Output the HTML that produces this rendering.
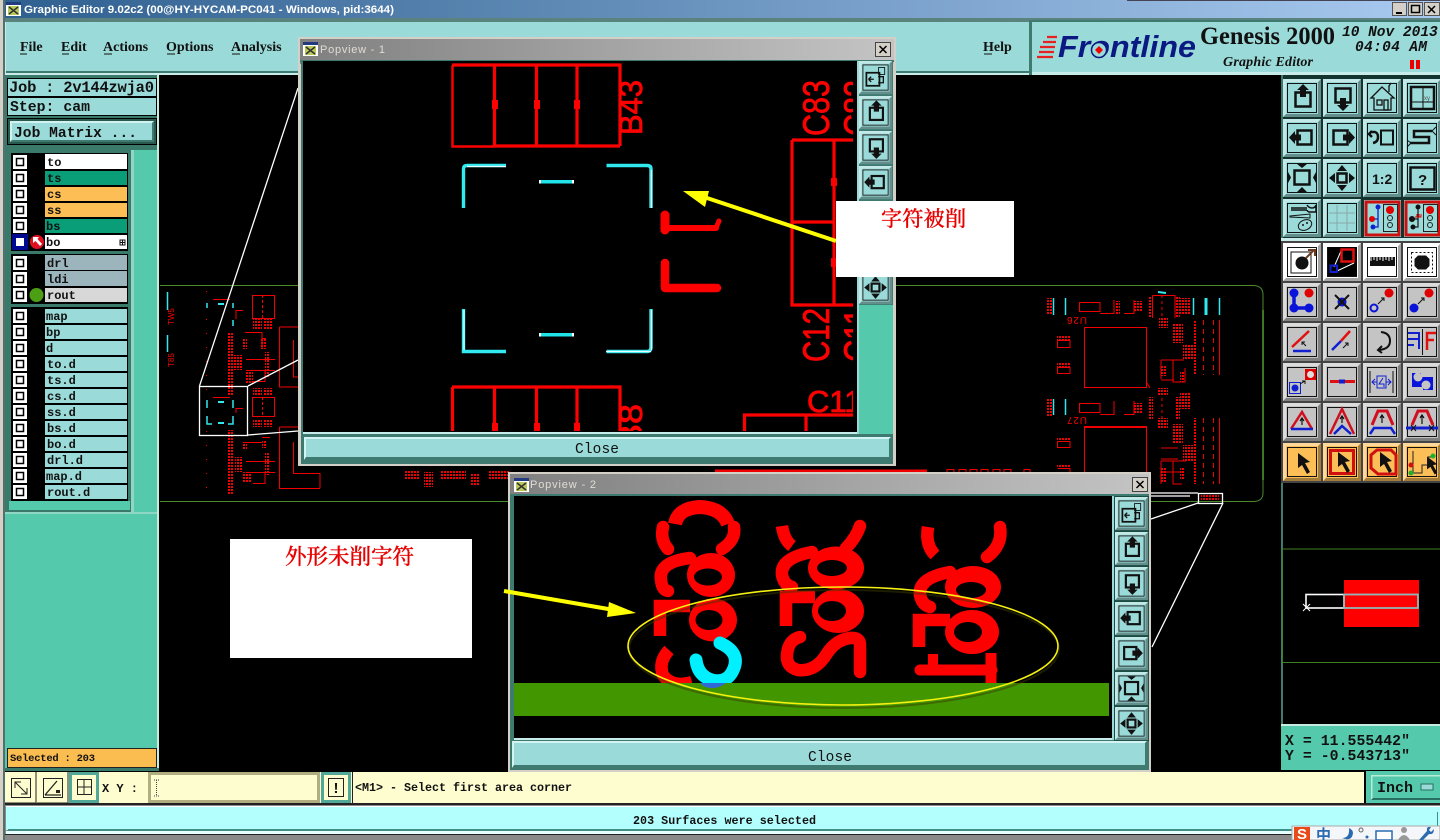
<!DOCTYPE html>
<html><head><meta charset="utf-8"><title>Graphic Editor</title>
<style>
html,body{margin:0;padding:0;background:#000;overflow:hidden;width:1440px;height:840px}
svg{display:block;position:absolute;left:0;top:0}
text{white-space:pre}
.m{font-family:"Liberation Mono",monospace;font-weight:bold;fill:#111}
.l{font-family:"Liberation Mono",monospace;font-weight:bold;font-size:12px;fill:#111}
.s{font-family:"Liberation Serif",serif;font-weight:bold;font-size:14px;fill:#111}
.r{font-family:"Liberation Sans",sans-serif;fill:#f00}
.c{font-family:"Liberation Serif","Noto Serif CJK SC",serif;fill:#e80000;font-weight:500;stroke:#e80000;stroke-width:.3px}
</style></head><body>
<svg width="1440" height="840" viewBox="0 0 1440 840" xmlns="http://www.w3.org/2000/svg">
<defs>
<linearGradient id="tg"><stop offset="0" stop-color="#2f6090"/><stop offset="1" stop-color="#a9caf0"/></linearGradient>
<linearGradient id="pg"><stop offset="0" stop-color="#808080"/><stop offset="1" stop-color="#c4c4c4"/></linearGradient>
<pattern id="d" width="3" height="3" patternUnits="userSpaceOnUse"><rect width="2" height="2" fill="#f00000"/></pattern>
<g id="f"><rect width="38" height="38"/><path d="M0 0H38L35 3H3V35L0 38Z" fill="#fff" opacity=".4"/><path d="M38 38H0L3 35H35V3L38 0Z" fill="#000" opacity=".35"/><rect x="4.500" y="4.500" width="29" height="29" fill="none" stroke="#111"/></g>
<g id="iup"><rect x="12.500" y="13.500" width="15" height="14" fill="none" stroke="#111" stroke-width="2.500"/><path d="M20 5L26 11H23V18H17V11H14Z" fill="#111"/></g>
<g id="idn"><rect x="12.500" y="9.500" width="15" height="14" fill="none" stroke="#111" stroke-width="2.500"/><path d="M20 32L26 26H23V19H17V26H14Z" fill="#111"/></g>
<g id="ilf"><rect x="14.500" y="11.500" width="14" height="14" fill="none" stroke="#111" stroke-width="2.500"/><path d="M6 18.500L12 12V15.500H18V21.500H12V25Z" fill="#111"/></g>
<g id="irt"><rect x="10.500" y="11.500" width="14" height="14" fill="none" stroke="#111" stroke-width="2.500"/><path d="M32 18.500L26 12V15.500H20V21.500H26V25Z" fill="#111"/></g>
<g id="ifit"><rect x="11.500" y="11.500" width="15" height="14" fill="none" stroke="#111" stroke-width="2.500"/><path d="M19 9L14 5H24ZM19 28L14 33H24ZM8 18.500L5 13V24ZM30 18.500L33 13V24Z" fill="#111"/></g>
<g id="imid"><rect x="14.500" y="14.500" width="9" height="9" fill="none" stroke="#111" stroke-width="2.500"/><path d="M19 6L14 12H24ZM19 32L14 26H24ZM6 19L12 14V24ZM32 19L26 14V24Z" fill="#111"/></g>
<g id="ipop"><rect x="8.500" y="13.500" width="15" height="15" fill="none" stroke="#111" stroke-width="2"/><rect x="22.500" y="7.500" width="7" height="8" fill="none" stroke="#111"/><path d="M22 18H28V25H22M11 21H17M11 21L14 18M11 21L14 24" fill="none" stroke="#111" stroke-width="1.500"/></g>
<g id="cur"><path d="M13 9V24L17 21L22 30L25 28L20 19L25 18Z" fill="#111"/></g>
</defs>

<!-- base -->
<rect width="1440" height="840" fill="#000"/>
<rect width="4" height="840" fill="#d4d0c8"/>
<rect x="3" width="2" height="840" fill="#55706c"/>
<!-- PCB -->
<g fill="none" stroke="#f00000" stroke-width="1">
<path stroke="#4a8a2a" d="M160 285.500H300M160 501.500H515M896 285.500H1254Q1263 286 1263 295V493Q1263 501 1254 501.500H1150"/>
<path stroke="#4a8a2a" stroke-width="2" d="M1263 310V480" opacity=".7"/>
<path stroke-dasharray="1 13" d="M206.500 291V496"/>
<path d="M213 299.500H230M236 310.500H243M236 310V319M213 397.500H230M236 408.500H243M236 408V413"/>
<rect x="252.500" y="295.500" width="22" height="23"/><rect x="252.500" y="397.500" width="22" height="19"/>
<path stroke-dasharray="3 2" d="M262.500 295V318M262.500 397V416"/>
<path d="M245 332.500H262V348M262 338.500H266M246 359.500H275M246 370.500H275M253 381.500H265V370M245 442.500H262M262 437.500H270M246 461.500H275M246 472.500H275M253 483.500H265V472"/>
<path d="M320 340.500H300M279.500 327V387H298M279.500 327H298M293.500 340V377H298M279.500 427V488.500H320M279.500 427H298M293.500 442V473.500H320M320 473V488"/>
<path d="M1084.500 327.500H1146.500V387.500H1084.500ZM1084.500 427.500V480M1146.500 427.500V480"/>
<path stroke-width="2" d="M1084 427H1147"/>
<path d="M1079.500 302.500H1100V311.500H1079.500ZM1079.500 403.500H1100V412.500H1079.500ZM1057.500 340.500H1070V347.500H1057.500ZM1057.500 367.500H1070V373.500H1057.500ZM1057.500 441.500H1070V447.500H1057.500ZM1057.500 468.500H1070V473M1152.500 295.500H1175V318M1152.500 295.500V318M1100 313.500H1114V300M1124 313.500H1134V300M1100 414.500H1114V401M1124 414.500H1134V401"/>
<path d="M1162 295V318M1162 398V420" stroke-dasharray="3 3"/>
<path d="M1203.500 320V375M1213.500 320V375M1203.500 418V484M1213.500 418V484" stroke-dasharray="5 4"/>
<path d="M1219.500 320V375M1219.500 418V484M1161 360H1184M1161 360V379M1173 360V382H1185V368M1161 380H1174M1161 459H1178M1161 448H1178M1161 472H1184M1161 461V484M1173 461V484H1182M1147 383L1150 388"/>
<path d="M1161 461H1186"/>
</g>
<rect x="715" y="469.500" width="212" height="2.500" fill="#f00000"/>
<g fill="none" stroke="#f00000"><path d="M947 472V469.500H954V472M959 472V469.500H966V472M970 472V469.500H977V472M981 472V469.500H988V472M993 472V469.500H1000V472M1004 472V469.500H1011V472M1024 472V469.500H1030V472"/></g>
<g fill="url(#d)">
<rect x="228" y="333" width="6" height="62"/><rect x="228" y="430" width="6" height="65"/>
<rect x="253" y="319" width="9" height="11"/><rect x="264" y="319" width="9" height="11"/>
<rect x="242" y="338" width="5" height="11"/><rect x="260" y="338" width="6" height="11"/>
<rect x="230" y="355" width="12" height="15"/><rect x="265" y="352" width="5" height="25"/>
<rect x="246" y="372" width="7" height="11"/><rect x="253" y="388" width="9" height="8"/><rect x="264" y="388" width="9" height="8"/>
<rect x="253" y="419" width="9" height="8"/><rect x="264" y="419" width="9" height="8"/>
<rect x="243" y="442" width="4" height="7"/><rect x="262" y="440" width="4" height="8"/>
<rect x="235" y="457" width="8" height="15"/><rect x="265" y="452" width="5" height="23"/><rect x="243" y="472" width="8" height="11"/>
<rect x="404" y="470" width="15" height="9"/><rect x="424" y="472" width="9" height="15"/><rect x="440" y="470" width="26" height="9"/><rect x="470" y="474" width="10" height="12"/><rect x="488" y="470" width="22" height="10"/>
<rect x="1047" y="298" width="6" height="17"/><rect x="1047" y="399" width="6" height="17"/>
<rect x="1057" y="336" width="13" height="4"/><rect x="1057" y="363" width="13" height="4"/><rect x="1057" y="437" width="13" height="4"/><rect x="1057" y="464" width="13" height="4"/>
<rect x="1116" y="301" width="4" height="14"/><rect x="1134" y="301" width="8" height="11"/><rect x="1148" y="296" width="4" height="22"/><rect x="1175" y="296" width="5" height="22"/><rect x="1180" y="298" width="11" height="16"/>
<rect x="1134" y="403" width="8" height="11"/><rect x="1148" y="397" width="5" height="22"/><rect x="1175" y="397" width="5" height="22"/><rect x="1180" y="393" width="11" height="16"/>
<rect x="1159" y="318" width="9" height="10"/><rect x="1173" y="323" width="10" height="20"/><rect x="1183" y="344" width="10" height="16"/><rect x="1161" y="366" width="5" height="10"/><rect x="1180" y="372" width="4" height="10"/><rect x="1158" y="388" width="10" height="8"/>
<rect x="1158" y="418" width="10" height="10"/><rect x="1173" y="424" width="10" height="20"/><rect x="1183" y="445" width="10" height="16"/><rect x="1161" y="468" width="5" height="14"/><rect x="1180" y="468" width="4" height="12"/>
<rect x="1193" y="320" width="4" height="55"/><rect x="1193" y="418" width="4" height="66"/>
<rect x="1201" y="495" width="18" height="6"/>
</g>
<g font-size="8" class="r"><text transform="translate(174 325) rotate(-90)">TW5</text><text transform="translate(174 367) rotate(-90)">T85</text></g>
<text transform="translate(1087 317) rotate(180)" class="r" font-size="10" textLength="20">U26</text>
<text transform="translate(1087 417) rotate(180)" class="r" font-size="10" textLength="20">U27</text>
<g fill="none" stroke="#30e8ee" stroke-width="1.500">
<path d="M167.500 292V310M167.500 335V352M207 303V308M233 303V308M233 320V326M207 400V408M233 400V408M207 416V424H212M233 416V424H228"/>
<path d="M218 304H224M218 402H224M218 423H224" stroke-width="2"/>
<path d="M1053.500 298V315M1065.500 298V315M1193.500 298V315M1219.500 298V315M1053.500 399V415M1065.500 399V415"/>
<path d="M1206 298V315" stroke-width="3"/>
<path d="M1158 292L1166 293" stroke-width="2"/>
</g>
<!-- magnifier lines -->
<g fill="none" stroke="#fff" stroke-width="1.300">
<rect x="199.500" y="386.500" width="48" height="49"/>
<path d="M199.500 386L298 88M248 386L298 360M248 435L298 431"/>
<rect x="1198.500" y="493.500" width="24" height="10"/>
<path d="M1198 503L1151 519M1223 503L1152 647M1198 493H1151M1190 496H1151"/>
</g>

<!-- title bar -->
<rect x="5" y="0" width="1435" height="18" fill="url(#tg)"/>
<path d="M1127 0.500H1440" stroke="#445" stroke-width="1"/>
<rect x="6" y="2" width="15" height="14" fill="#fff"/><rect x="6" y="2" width="15" height="3" fill="#223a80"/><rect x="8" y="6" width="11" height="9" fill="#b9c95a"/><path d="M9 7L18 14M18 7L9 14" stroke="#333" stroke-width="1.500"/>
<text x="24" y="13" font-family="Liberation Sans" font-weight="bold" font-size="11" fill="#fff" textLength="370" lengthAdjust="spacingAndGlyphs">Graphic Editor 9.02c2 (00@HY-HYCAM-PC041 - Windows, pid:3644)</text>
<g stroke="#555" fill="#d4d0c8"><rect x="1392.500" y="2.500" width="14" height="13"/><rect x="1408.500" y="2.500" width="14" height="13"/><rect x="1424.500" y="2.500" width="15" height="13"/></g>
<path d="M1396 13H1402" stroke="#000" stroke-width="2"/><rect x="1411.500" y="5.500" width="8" height="7" fill="none" stroke="#000" stroke-width="1.500"/><path d="M1428 6L1435 13M1435 6L1428 13" stroke="#000" stroke-width="1.500"/>

<!-- menu bar -->
<rect x="5" y="18" width="1435" height="57" fill="#c7ecea"/>
<rect x="5" y="18" width="1435" height="4" fill="#5a837e"/>
<rect x="6" y="22" width="1023" height="49" fill="#9adad8"/>
<rect x="6" y="71" width="1023" height="2" fill="#3e7a70"/><rect x="1029" y="20" width="3" height="55" fill="#3e7a70"/>
<rect x="1032" y="22" width="408" height="50" fill="#9adad8"/><rect x="1032" y="20" width="408" height="2" fill="#3e7a70"/>
<g class="s"><text x="20" y="51">File</text><text x="61" y="51">Edit</text><text x="103" y="51">Actions</text><text x="166" y="51">Options</text><text x="231" y="51">Analysis</text><text x="983" y="51">Help</text></g>
<path d="M20 54H27M62 54H69M104 54H112M167 54H175M232 54H240M984 54H992" stroke="#111"/>
<!-- logo -->
<g stroke="#e82020" stroke-width="2.200"><path d="M1047 37H1057M1043 42H1056M1040 47H1055M1039 52H1054M1037 57H1053"/></g>
<text x="1058" y="57" font-family="Liberation Sans" font-weight="bold" font-style="italic" font-size="31" fill="#0b1a82" textLength="138" lengthAdjust="spacingAndGlyphs">Frontline</text>
<circle cx="1099" cy="50" r="7.500" fill="#9adad8" stroke="#0b1a82" stroke-width="1.500"/><path d="M1099 46L1103 50L1099 54L1095 50Z" fill="#e00"/>
<text x="1200" y="44" font-family="Liberation Serif" font-weight="bold" font-size="25" fill="#111" textLength="135" lengthAdjust="spacingAndGlyphs">Genesis 2000</text>
<text x="1223" y="66" font-family="Liberation Serif" font-weight="bold" font-style="italic" font-size="14" fill="#111" textLength="90">Graphic Editor</text>
<text x="1342" y="36" class="m" font-style="italic" font-size="14.500">10 Nov 2013</text>
<text x="1355" y="51" class="m" font-style="italic" font-size="14.500" textLength="72">04:04 AM</text>
<rect x="1410" y="60" width="4" height="9" fill="#e00"/><rect x="1416" y="60" width="4" height="9" fill="#e00"/>

<!-- left panel -->
<rect x="5" y="75" width="154" height="696" fill="#54c9ab"/>
<rect x="5" y="75" width="154" height="73" fill="#3a7a6a"/>
<rect x="7.500" y="78.500" width="149" height="18" fill="#9adad8" stroke="#000"/>
<rect x="7.500" y="97.500" width="149" height="18" fill="#9adad8" stroke="#000"/>
<text x="9" y="92" class="m" font-size="15.500" textLength="145">Job : 2v144zwja0</text>
<text x="10" y="111" class="m" font-size="14.800" textLength="80">Step: cam</text>
<rect x="7.500" y="118.500" width="149" height="26" fill="#2a5a4e" stroke="#000"/>
<rect x="10" y="121" width="144" height="21" fill="#9adad8"/><path d="M10 121H154L152 123H12V140L10 142Z" fill="#d0f2f0"/><path d="M154 142H10L12 140H152V123L154 121Z" fill="#3e7a70"/>
<text x="14" y="137" class="m" font-size="14.600" textLength="123">Job Matrix ...</text>

<rect x="5" y="148" width="128" height="364" fill="#3a7a6a"/>
<rect x="131" y="148" width="3" height="364" fill="#8fd6c4"/>
<rect x="5" y="148" width="154" height="2" fill="#3a7a6a"/>
<rect x="9" y="501" width="121" height="9" fill="#54c9ab"/>
<rect x="11" y="153" width="117" height="98" fill="#000"/><rect x="11" y="254" width="117" height="50" fill="#000"/><rect x="11" y="307" width="117" height="194" fill="#000"/>
<rect x="5" y="512" width="154" height="2" fill="#8fd6c4"/>
<rect x="157" y="75" width="2" height="696" fill="#c6ecdf"/>

<!-- labels -->
<g>
<rect x="45" y="154" width="82" height="15" fill="#fff"/><rect x="45" y="171" width="82" height="14" fill="#0a9e78"/><rect x="45" y="187" width="82" height="14" fill="#fdbe55"/><rect x="45" y="203" width="82" height="14" fill="#fdbe55"/><rect x="45" y="219" width="82" height="14" fill="#0a9e78"/><rect x="45" y="235" width="82" height="14" fill="#fff"/>
<rect x="45" y="255" width="82" height="15" fill="#9cb4bc"/><rect x="45" y="271" width="82" height="15" fill="#9cb4bc"/><rect x="45" y="288" width="82" height="14" fill="#d8d8d8"/>
<g fill="#9adad8"><rect x="45" y="309" width="82" height="14"/><rect x="45" y="325" width="82" height="14"/><rect x="45" y="341" width="82" height="14"/><rect x="45" y="357" width="82" height="14"/><rect x="45" y="373" width="82" height="14"/><rect x="45" y="389" width="82" height="14"/><rect x="45" y="405" width="82" height="14"/><rect x="45" y="421" width="82" height="14"/><rect x="45" y="437" width="82" height="14"/><rect x="45" y="453" width="82" height="14"/><rect x="45" y="469" width="82" height="14"/><rect x="45" y="485" width="82" height="14"/></g>
</g>
<g class="l">
<text x="47" y="166">to</text><text x="47" y="182">ts</text><text x="47" y="198">cs</text><text x="47" y="214">ss</text><text x="46" y="230">bs</text><text x="46" y="246">bo</text>
<text x="47" y="267">drl</text><text x="47" y="283">ldi</text><text x="47" y="299">rout</text>
<text x="46" y="320">map</text><text x="46" y="336">bp</text><text x="46" y="352">d</text><text x="47" y="368">to.d</text><text x="47" y="384">ts.d</text><text x="47" y="400">cs.d</text><text x="47" y="416">ss.d</text><text x="47" y="432">bs.d</text><text x="47" y="448">bo.d</text><text x="47" y="464">drl.d</text><text x="46" y="480">map.d</text><text x="47" y="496">rout.d</text>
</g>
<rect x="120" y="240" width="5" height="5" fill="none" stroke="#111"/>
<path d="M120 242.500H125M122.500 240V245" stroke="#111"/>
<!-- checkboxes -->
<rect x="12" y="234" width="16" height="16" fill="#000a90"/>
<g fill="#fff">
<rect x="13" y="155" width="14" height="14"/><rect x="13" y="171" width="14" height="14"/><rect x="13" y="187" width="14" height="14"/><rect x="13" y="203" width="14" height="14"/><rect x="13" y="219" width="14" height="14"/>
<rect x="16" y="238" width="8" height="8"/>
<rect x="13" y="256" width="14" height="14"/><rect x="13" y="272" width="14" height="14"/><rect x="13" y="288" width="14" height="14"/>
<rect x="13" y="309" width="14" height="14"/><rect x="13" y="325" width="14" height="14"/><rect x="13" y="341" width="14" height="14"/><rect x="13" y="357" width="14" height="14"/><rect x="13" y="373" width="14" height="14"/><rect x="13" y="389" width="14" height="14"/><rect x="13" y="405" width="14" height="14"/><rect x="13" y="421" width="14" height="14"/><rect x="13" y="437" width="14" height="14"/><rect x="13" y="453" width="14" height="14"/><rect x="13" y="469" width="14" height="14"/><rect x="13" y="485" width="14" height="14"/>
</g>
<g fill="none" stroke="#000" stroke-width="1.500">
<rect x="16.500" y="158.500" width="7" height="7"/><rect x="16.500" y="174.500" width="7" height="7"/><rect x="16.500" y="190.500" width="7" height="7"/><rect x="16.500" y="206.500" width="7" height="7"/><rect x="16.500" y="222.500" width="7" height="7"/>
<rect x="16.500" y="259.500" width="7" height="7"/><rect x="16.500" y="275.500" width="7" height="7"/><rect x="16.500" y="291.500" width="7" height="7"/>
<rect x="16.500" y="312.500" width="7" height="7"/><rect x="16.500" y="328.500" width="7" height="7"/><rect x="16.500" y="344.500" width="7" height="7"/><rect x="16.500" y="360.500" width="7" height="7"/><rect x="16.500" y="376.500" width="7" height="7"/><rect x="16.500" y="392.500" width="7" height="7"/><rect x="16.500" y="408.500" width="7" height="7"/><rect x="16.500" y="424.500" width="7" height="7"/><rect x="16.500" y="440.500" width="7" height="7"/><rect x="16.500" y="456.500" width="7" height="7"/><rect x="16.500" y="472.500" width="7" height="7"/><rect x="16.500" y="488.500" width="7" height="7"/>
</g>
<circle cx="37" cy="242" r="7" fill="#e01020"/><path d="M33 237H39L37.500 239L42 244L40 246L35.500 241L33 243Z" fill="#fff"/>
<circle cx="36.500" cy="295" r="7" fill="#4c9e14"/>
<!-- selected -->
<rect x="7.500" y="748.500" width="149" height="19" fill="#fbbc50" stroke="#222"/>
<text x="10" y="761" class="m" font-size="10.500" textLength="85">Selected : 203</text>
<rect x="5" y="768" width="154" height="3" fill="#3a7a6a"/>

<!-- right toolbar -->
<rect x="1281" y="75" width="159" height="165" fill="#14332e"/>
<rect x="1281" y="75" width="2" height="165" fill="#3e7a70"/>
<rect x="1281" y="240" width="159" height="243" fill="#444"/>
<rect x="1281" y="238" width="159" height="3" fill="#c7ecea"/>
<g fill="#9adad8">
<use href="#f" x="1283" y="79"/><use href="#f" x="1323" y="79"/><use href="#f" x="1363" y="79"/><use href="#f" x="1403" y="79"/>
<use href="#f" x="1283" y="119"/><use href="#f" x="1323" y="119"/><use href="#f" x="1363" y="119"/><use href="#f" x="1403" y="119"/>
<use href="#f" x="1283" y="159"/><use href="#f" x="1323" y="159"/><use href="#f" x="1363" y="159"/><use href="#f" x="1403" y="159"/>
<use href="#f" x="1283" y="199"/><use href="#f" x="1323" y="199"/>
</g>
<use href="#iup" x="1283" y="79"/><use href="#idn" x="1323" y="79"/>
<g transform="translate(1363 79)" fill="none" stroke="#111" stroke-width="1.300"><path d="M19 8L8 19H11V31H28V19H31L19 8Z"/><rect x="14" y="21" width="5" height="5"/><rect x="21" y="21" width="4" height="10"/><path d="M26 13V7L28 4"/></g>
<g transform="translate(1403 79)" fill="none" stroke="#111"><rect x="8" y="8" width="23" height="22" stroke-width="2.500"/><path d="M20 8V30M8 23H31"/><text x="21" y="21" font-family="Liberation Sans" font-size="6" fill="#555" stroke="none">xy</text></g>
<use href="#ilf" x="1283" y="119"/><use href="#irt" x="1323" y="119"/>
<g transform="translate(1363 119)"><rect x="18" y="11.500" width="12" height="14" fill="none" stroke="#111" stroke-width="2"/><path d="M9 12L6 15L9 18M7 13H12Q15 14 15 18Q15 23 10 24" fill="none" stroke="#111" stroke-width="2.500"/></g>
<g transform="translate(1403 119)" fill="none" stroke="#111"><path d="M7 24H26V18H11V12H29" stroke-width="2.500"/><path d="M33 8L29 12L33 16M4 21L8 24L4 28" stroke-width="1"/></g>
<use href="#ifit" x="1283" y="159"/><use href="#imid" x="1323" y="159"/>
<text x="1372" y="184" font-family="Liberation Sans" font-weight="bold" font-size="14" fill="#111">1:2</text>
<g transform="translate(1403 159)"><rect x="7.500" y="8.500" width="24" height="22" fill="none" stroke="#111" stroke-width="2.500"/><text x="15" y="26" font-family="Liberation Sans" font-weight="bold" font-size="15" fill="#111">?</text></g>
<g transform="translate(1283 199)"><path d="M8 9H24M24 6Q26 9 29 9T33 6V13H26Q24 12 24 11M8 11H24" stroke="#111" stroke-width="1.500" fill="none"/><path d="M7 17L27 15V19L7 18Z" fill="none" stroke="#111"/><ellipse cx="22" cy="26" rx="7" ry="5" fill="none" stroke="#111" transform="rotate(-25 22 26)"/><circle cx="20" cy="26" r="1" fill="#111"/><circle cx="24" cy="24" r="1" fill="#111"/></g>
<g transform="translate(1323 199)" stroke="#8aa" fill="none"><path d="M6 14H32M6 24H32M14 6V32M24 6V32"/></g>
<!-- red bordered -->
<g transform="translate(1363 199)"><rect x="1" y="1" width="37" height="37" fill="#9adad8"/><rect x="3" y="3" width="33" height="33" fill="#9adad8" stroke="#cc1010" stroke-width="3"/><rect x="20.500" y="5.500" width="14" height="27" fill="none" stroke="#222"/><circle cx="27" cy="11" r="4" fill="#e00000"/><circle cx="27" cy="19" r="2.500" fill="none" stroke="#222"/><circle cx="27" cy="26" r="2.500" fill="none" stroke="#222"/><path d="M15 8V20H9M15 20V28H10" stroke="#1020d0" stroke-width="1.300" fill="none"/><circle cx="15" cy="8" r="2.500" fill="#1020d0"/><circle cx="9" cy="20" r="3" fill="#e00000"/><circle cx="10" cy="28" r="2.500" fill="#1020d0"/></g>
<g transform="translate(1403 199)"><rect x="1" y="1" width="37" height="37" fill="#9adad8"/><rect x="3" y="3" width="33" height="33" fill="#9adad8" stroke="#cc1010" stroke-width="3"/><rect x="20.500" y="5.500" width="14" height="27" fill="none" stroke="#222"/><circle cx="27" cy="11" r="4" fill="#e00000"/><circle cx="27" cy="19" r="2.500" fill="none" stroke="#222"/><circle cx="27" cy="26" r="2.500" fill="none" stroke="#222"/><path d="M15 8V20H9M15 20V28H10" stroke="#222" stroke-width="1.300" fill="none"/><circle cx="15" cy="8" r="2.500" fill="#111"/><circle cx="9" cy="20" r="3" fill="#111"/><circle cx="10" cy="28" r="2.500" fill="#111"/><path d="M12 18H18V15M14 18V15M16 18V15" stroke="#e00000" fill="none"/></g>

<!-- group 2 -->
<g fill="#fff"><use href="#f" x="1283" y="243"/><use href="#f" x="1363" y="243"/><use href="#f" x="1403" y="243"/></g>
<use href="#f" x="1323" y="243" fill="#fff"/>
<rect x="1328" y="247" width="29" height="29" fill="#000"/>
<g fill="#c4c4c4">
<use href="#f" x="1283" y="283"/><use href="#f" x="1323" y="283"/><use href="#f" x="1363" y="283"/><use href="#f" x="1403" y="283"/>
<use href="#f" x="1283" y="323"/><use href="#f" x="1323" y="323"/><use href="#f" x="1363" y="323"/><use href="#f" x="1403" y="323"/>
<use href="#f" x="1283" y="363"/><use href="#f" x="1323" y="363"/><use href="#f" x="1363" y="363"/><use href="#f" x="1403" y="363"/>
<use href="#f" x="1283" y="403"/><use href="#f" x="1323" y="403"/><use href="#f" x="1363" y="403"/><use href="#f" x="1403" y="403"/>
</g>
<g fill="#fcbf58"><use href="#f" x="1283" y="443"/><use href="#f" x="1323" y="443"/><use href="#f" x="1363" y="443"/><use href="#f" x="1403" y="443"/></g>
<g transform="translate(1283 243)"><rect x="8" y="9" width="20" height="21" fill="none" stroke="#111"/><circle cx="19" cy="20" r="6.500" fill="#111"/><path d="M23 15L31 7M25 7H32V13" stroke="#6b3a20" stroke-width="2" fill="none"/></g>
<g transform="translate(1323 243)"><path d="M11 24L18 8M14 28L31 20" stroke="#fff"/><rect x="18.500" y="6.500" width="12" height="12" fill="none" stroke="#e01010" stroke-width="2.500"/><rect x="7.500" y="22.500" width="6.500" height="6.500" fill="none" stroke="#1020d0" stroke-width="2"/></g>
<g transform="translate(1363 243)"><rect x="7" y="14" width="25" height="9" fill="#111"/><path d="M8 14V18M11 14V17M14 14V18M17 14V17M20 14V18M23 14V17M26 14V18M29 14V17" stroke="#fff"/></g>
<g transform="translate(1403 243)"><rect x="8.500" y="9.500" width="21" height="20" fill="none" stroke="#111" stroke-dasharray="2 2"/><path d="M15 12.500H23L26.500 16V23L23 26.500H15L11.500 23V16Z" fill="#111"/></g>
<!-- row 2 -->
<g transform="translate(1283 283)"><path d="M11 10V25H26" stroke="#0a14d8" stroke-width="3.500" fill="none"/><circle cx="11" cy="10" r="4.500" fill="#0a14d8"/><circle cx="11" cy="25" r="4.500" fill="#0a14d8"/><circle cx="26" cy="25" r="4.500" fill="#0a14d8"/><circle cx="26" cy="10" r="4.500" fill="#e00000"/></g>
<g transform="translate(1323 283)"><circle cx="19" cy="19" r="4.500" fill="#0a14d8"/><path d="M12 12L26 26M26 12L12 26" stroke="#111" stroke-width="2"/></g>
<g transform="translate(1363 283)"><circle cx="11" cy="25" r="3.500" fill="none" stroke="#0a14d8" stroke-width="2"/><circle cx="26" cy="10" r="4.500" fill="#e00000"/><path d="M15 21L21 15M18 15H21V18" stroke="#111" fill="none"/></g>
<g transform="translate(1403 283)"><circle cx="11" cy="25" r="4.500" fill="#0a14d8"/><circle cx="26" cy="10" r="4.500" fill="#e00000"/><path d="M15 21L21 15M18 15H21V18" stroke="#111" fill="none"/></g>
<!-- row 3 -->
<g transform="translate(1283 323)"><path d="M9 24L26 8" stroke="#e01010" stroke-width="2.500"/><path d="M10 28H28" stroke="#1020d0" stroke-width="2.500"/><path d="M23 23L19 19M19 22V19H22" stroke="#111" fill="none"/></g>
<g transform="translate(1323 323)"><path d="M9 27L18 18" stroke="#1020d0" stroke-width="2.500"/><path d="M18 18L27 8" stroke="#e01010" stroke-width="2.500"/><path d="M20 25L25 20M22 20H25V23" stroke="#111" fill="none"/></g>
<g transform="translate(1363 323)"><path d="M18 9Q27 10 27 18Q27 26 16 27M19 23L15 27L19 30" fill="none" stroke="#111" stroke-width="2"/></g>
<g transform="translate(1403 323)"><path d="M5 10H16V26M5 16H16M5 22H11" stroke="#1020d0" stroke-width="2" fill="none"/><path d="M19.500 6V32" stroke="#111"/><path d="M24 27V10H33M24 17H31" stroke="#e01010" stroke-width="2.500" fill="none"/></g>
<!-- row 4 -->
<g transform="translate(1283 363)"><rect x="6.500" y="19.500" width="11" height="11" fill="none" stroke="#1020d0"/><circle cx="12" cy="25" r="3.500" fill="#1020d0"/><rect x="22" y="6" width="11" height="11" fill="#e00000"/><circle cx="27.500" cy="11.500" r="3.500" fill="#ddd"/><path d="M17 21L22 18M19 18H22V21" stroke="#111" fill="none"/></g>
<g transform="translate(1323 363)"><path d="M7 18.500H32" stroke="#e01010" stroke-width="3"/><rect x="16" y="16.500" width="6" height="4" fill="#1020d0"/></g>
<g transform="translate(1363 363)"><path d="M7 8V30M30 8V30" stroke="#111"/><path d="M9 19H28M12 16L9 19L12 22M25 16L28 19L25 22" stroke="#1020d0" fill="none"/><rect x="14" y="13" width="9" height="12" fill="#c4c4c4" stroke="#1020d0"/><path d="M20 15L16 21H21V24" stroke="#1020d0" fill="none"/></g>
<g transform="translate(1403 363)"><path d="M9 10H18V14H30V27H20V24H9Z" fill="#0a14d8"/><circle cx="15" cy="14" r="4.500" fill="#c4c4c4"/><circle cx="23" cy="22" r="4.500" fill="#c4c4c4"/></g>
<!-- row 5 -->
<g transform="translate(1283 403)"><path d="M8 26L19 9L29 26" stroke="#d01020" stroke-width="2.500" fill="none"/><path d="M8 26H30" stroke="#1020d0" stroke-width="2.500"/><path d="M19 22V16M17 18L19 15L21 18" stroke="#111" fill="none" stroke-width="1.200"/></g>
<g transform="translate(1323 403)"><path d="M7 31L19 6L31 31" stroke="#d01020" stroke-width="2.500" fill="none"/><path d="M11 31L19 23L28 31" stroke="#1020d0" stroke-width="2.500" fill="none"/><path d="M19 20V14M17 16L19 13L21 16" stroke="#111" fill="none" stroke-width="1.200"/></g>
<g transform="translate(1363 403)"><path d="M9 22L15 8H24L30 22" stroke="#d01020" stroke-width="3" fill="none"/><path d="M7 31L11 25H28L32 31" stroke="#1020d0" stroke-width="2.500" fill="none"/><path d="M19 20V13M17 15L19 12L21 15" stroke="#111" fill="none" stroke-width="1.200"/></g>
<g transform="translate(1403 403)"><path d="M9 22L15 8H24L30 22" stroke="#d01020" stroke-width="3" fill="none"/><path d="M3 25H35" stroke="#1020d0" stroke-width="3"/><path d="M8 22L13 28M13 22L8 28M26 22L31 28M31 22L26 28" stroke="#111"/><path d="M19 21V13M17 15L19 12L21 15" stroke="#111" fill="none" stroke-width="1.200"/></g>
<!-- row 6 -->
<use href="#cur" x="1285" y="444"/>
<g transform="translate(1323 443)"><rect x="7.500" y="7.500" width="23" height="23" fill="none" stroke="#d01010" stroke-width="3"/><use href="#cur" x="2" y="0"/></g>
<g transform="translate(1363 443)"><path d="M14 7H28L33 12V31H15L8 25V12Z" fill="none" stroke="#d01010" stroke-width="3"/><use href="#cur" x="4" y="0"/></g>
<g transform="translate(1403 443)"><path d="M10 8V22L10 30H19V22H25V14H31" stroke="#222" fill="none"/><circle cx="8" cy="22" r="2.500" fill="#d01010"/><circle cx="30" cy="13" r="2.500" fill="#20b030"/><circle cx="8" cy="30" r="2.500" fill="#20b030"/><use href="#cur" transform="translate(13 6) scale(.85)"/></g>

<!-- mini view -->
<rect x="1281" y="483" width="159" height="242" fill="#000"/>
<rect x="1281" y="483" width="2" height="242" fill="#3e7a70"/>
<rect x="1283" y="725" width="157" height="1" fill="#fff"/>
<path d="M1282.500 549H1440M1282.500 662.500H1440M1282.500 549V662.500" stroke="#3f8020" fill="none"/>
<rect x="1344" y="580" width="75" height="47" fill="#f00"/>
<rect x="1306" y="594.500" width="38" height="13.500" fill="none" stroke="#fff" stroke-width="1.600"/>
<rect x="1344" y="594.500" width="74" height="13.500" fill="none" stroke="#8fb8b8" stroke-width="1.800"/>
<path d="M1303 604L1310 611M1310 604L1303 611" stroke="#fff"/>
<rect x="1281" y="726" width="159" height="44" fill="#54c9ab"/>
<rect x="1281" y="724" width="159" height="2" fill="#c6ecdf"/>
<text x="1285" y="745" class="m" font-size="14.800" textLength="125">X = 11.555442"</text>
<text x="1285" y="760" class="m" font-size="14.800" textLength="125">Y = -0.543713"</text>

<!-- bottom bar -->
<rect x="5" y="771" width="1435" height="32" fill="#fdfdd0"/>
<rect x="5" y="771" width="1435" height="1" fill="#000"/>
<g transform="translate(5 772)"><rect width="31" height="31" fill="#fdfdd0"/><path d="M31 0V31H0" stroke="#222" fill="none" stroke-width="1"/><rect x="6.500" y="6.500" width="19" height="19" fill="none" stroke="#222"/><path d="M10 10L22 22M10 16V10H16M22 16V22H16" fill="none" stroke="#222"/></g>
<g transform="translate(37 772)"><rect width="31" height="31" fill="#fdfdd0"/><path d="M31 0V31H0" stroke="#222" fill="none"/><rect x="6.500" y="6.500" width="19" height="19" fill="none" stroke="#222"/><path d="M8 23H24M8 23L20 9" stroke="#222" fill="none" stroke-width="1.300"/><rect x="19" y="18" width="4" height="3" fill="#222"/></g>
<rect x="69" y="772" width="30" height="31" fill="#52a898"/><rect x="72" y="775" width="24" height="25" fill="#fdfdd0"/>
<g fill="none" stroke="#222"><rect x="77.500" y="779.500" width="14" height="15"/><path d="M84 780V795M78 787H92"/></g>
<text x="102" y="792" class="m" font-size="12">X Y :</text>
<rect x="149.500" y="773.500" width="169" height="28" fill="#fdfdd0" stroke="#b0ad80" stroke-width="3"/>
<path d="M156.500 780V796M154 780H159M154 796H159" stroke="#444" stroke-dasharray="1 1"/>
<rect x="321" y="772" width="30" height="31" fill="#52a898"/><rect x="324" y="775" width="24" height="25" fill="#fdfdd0"/>
<rect x="328.500" y="778.500" width="15" height="18" fill="none" stroke="#222"/>
<text x="331.500" y="793" class="m" font-size="15">!</text>
<rect x="352" y="772" width="1" height="31" fill="#222"/>
<text x="355" y="791" class="m" font-size="11.700" textLength="217">&lt;M1&gt; - Select first area corner</text>
<rect x="1364" y="771" width="76" height="32" fill="#54c9ab"/><rect x="1364" y="771" width="2" height="32" fill="#000"/>
<rect x="1371" y="775" width="69" height="25" fill="#54c9ab"/>
<path d="M1371 775H1440V776.500H1372.500V798.500L1371 800Z" fill="#b8ecd8"/><path d="M1371 800H1440V798H1373Z" fill="#2a7060"/>
<text x="1377" y="792" font-family="Liberation Mono" font-size="15" font-weight="bold" fill="#111" textLength="36">Inch</text>
<rect x="1421" y="784" width="12" height="6" fill="#9adad8" stroke="#2a7060"/>
<!-- status -->
<rect x="5" y="803" width="1435" height="37" fill="#8a8a8a"/>
<rect x="5" y="803" width="1435" height="2" fill="#222"/>
<rect x="6" y="806" width="1434" height="1" fill="#fff"/>
<rect x="6" y="807" width="1434" height="23" fill="#b3fffd"/>
<rect x="8" y="829" width="1432" height="2" fill="#3f8f88"/>
<rect x="6" y="831" width="1434" height="3" fill="#e8ffff"/>
<rect x="5" y="834" width="1435" height="1" fill="#222"/>
<rect x="1437" y="812" width="1" height="18" fill="#3f8f88"/>
<text x="633" y="824" class="m" font-size="11.700" textLength="183">203 Surfaces were selected</text>
<!-- tray -->
<rect x="1292" y="826" width="148" height="14" fill="#f4f6fa" stroke="#aaa"/>
<rect x="1294" y="827" width="16" height="13" fill="#e84a1a"/><text x="1297" y="839" font-family="Liberation Sans" font-weight="bold" font-size="15" fill="#fff">S</text>
<text x="1316" y="840" font-family="Noto Sans CJK SC" font-weight="bold" font-size="15" fill="#2a6ab0">中</text>
<path d="M1349 828Q1350 838 1342 838Q1352 842 1353 833Q1353 830 1349 828Z" fill="#2a6ab0"/>
<circle cx="1361" cy="830" r="2" fill="none" stroke="#666"/><circle cx="1367" cy="837" r="1.500" fill="#2a6ab0"/>
<rect x="1376" y="831" width="16" height="9" fill="#fff" stroke="#2a6ab0" stroke-width="1.500"/>
<circle cx="1404" cy="830" r="3" fill="#999"/><path d="M1398 840Q1404 830 1410 840Z" fill="#999"/>
<path d="M1419 840L1427 831Q1426 826 1431 827L1429 830L1431 832L1434 829Q1434 835 1429 834L1423 840Z" fill="#2a6ab0"/>

<!-- popview 1 -->
<rect x="298" y="37" width="598" height="429" fill="#d4d0c8"/>
<rect x="300" y="39" width="594" height="25" fill="url(#pg)"/>
<rect x="300" y="60" width="594" height="2" fill="#3e7a70"/>
<rect x="301" y="60" width="592" height="404" fill="#3e7a70"/>
<rect x="303" y="61" width="554" height="371" fill="#000"/>
<rect x="303" y="432" width="554" height="2" fill="#c7ecea"/>
<rect x="857" y="61" width="2" height="373" fill="#9adad8"/>
<rect x="859" y="61" width="34" height="244" fill="#3e7a70"/>
<rect x="859" y="305" width="34" height="129" fill="#54c9ab"/>
<rect x="301" y="434" width="592" height="30" fill="#3e7a70"/>
<rect x="304" y="437" width="587" height="23" fill="#9adad8"/>
<path d="M304 437H891L889 439H306V458L304 460Z" fill="#d2f4f2"/><path d="M891 460H304L306 457H889V439L891 437Z" fill="#3e7a70"/>
<text x="575" y="453" font-family="Liberation Mono" font-size="14.500" fill="#111" textLength="44">Close</text>
<rect x="303" y="42" width="15" height="14" fill="#fff"/><rect x="303" y="42" width="15" height="3" fill="#223a80"/><rect x="305" y="46" width="11" height="9" fill="#b9c95a"/><path d="M306 47L315 54M315 47L306 54" stroke="#333" stroke-width="1.500"/>
<text x="320" y="53" font-family="Liberation Sans" font-size="11" fill="#e0dcd4" textLength="65">Popview - 1</text>
<rect x="875.500" y="42.500" width="15" height="14" fill="#d4d0c8" stroke="#444"/><path d="M879.500 46L886.500 53M886.500 46L879.500 53" stroke="#000" stroke-width="1.500"/>

<svg x="303" y="61" width="550" height="370" viewBox="303 61 550 370">
<g fill="none" stroke="#f00" stroke-width="3.200">
<path d="M452 65H620V146M494.500 65V146M536.500 65V146M577 65V146M495 146H620"/>
<path d="M452.500 65V146.500H495" stroke-width="2.400"/>
<path d="M452 387H620V431M452.500 387V431M494.500 387V431M536.500 387V431M577 387V431"/>
<path d="M792 140H853M792 140V305H853M834 140V305M792 222H834"/>
<path d="M744.500 431V415H853M806 415V431"/>
</g>
<g fill="#f00"><rect x="492" y="100" width="6" height="9"/><rect x="534" y="100" width="6" height="9"/><rect x="574" y="100" width="6" height="9"/><rect x="492" y="423" width="6" height="9"/><rect x="534" y="423" width="6" height="9"/><rect x="574" y="423" width="6" height="9"/><rect x="831" y="178" width="6" height="8"/><rect x="831" y="258" width="6" height="9"/></g>
<g class="r" stroke="#f00" stroke-width=".8">
<text font-size="32" transform="translate(642 135) rotate(-90)" textLength="55" lengthAdjust="spacingAndGlyphs">B43</text>
<text font-size="37" transform="translate(829 136) rotate(-90)" textLength="56" lengthAdjust="spacingAndGlyphs">C83</text>
<text font-size="37" transform="translate(870 136) rotate(-90)" textLength="56" lengthAdjust="spacingAndGlyphs">C83</text>
<text font-size="37" transform="translate(829 362) rotate(-90)" textLength="54" lengthAdjust="spacingAndGlyphs">C12</text>
<text font-size="37" transform="translate(870 362) rotate(-90)" textLength="54" lengthAdjust="spacingAndGlyphs">C11</text>
<text font-size="32" transform="translate(642 448) rotate(-90)" textLength="44" lengthAdjust="spacingAndGlyphs">B8</text>
<text x="807" y="412" font-size="31">C11</text>
</g>
<g fill="none" stroke="#30eaf0" stroke-width="3.400">
<path d="M506 165.500H467Q463.500 165.500 463.500 169V208M606.500 165.500H647Q651 165.500 651 169V208M463.500 309V351.500H506M651 309V347Q651 351.500 647 351.500H606.500"/>
</g>
<g fill="none" stroke="#fff" stroke-width="1.200">
<path d="M506 166.500H467M651.500 170V208M606 351.500H651M651.500 310V350M464 310V350" opacity=".9"/>
</g>
<g><rect x="540" y="180" width="33" height="3.500" fill="#20e4ea"/><rect x="540" y="333" width="33" height="3.500" fill="#20e4ea"/><path d="M540 180V183.500M573 180V183.500M540 333V336.500M573 333V336.500" stroke="#fff" stroke-width="2"/></g>
<g fill="none" stroke="#f00" stroke-linecap="round">
<path d="M665 228H716" stroke-width="6"/><path d="M665 215V230" stroke-width="9"/><path d="M716 228L719 221" stroke-width="5"/>
<path d="M665 263V288H717" stroke-width="8.500" stroke-linejoin="round"/>
</g>
</svg>

<!-- popview 2 -->
<rect x="508" y="472" width="643" height="300" fill="#d4d0c8"/>
<rect x="510" y="474" width="639" height="21" fill="url(#pg)"/>
<rect x="510" y="494" width="639" height="276" fill="#3e7a70"/>
<rect x="514" y="496" width="600" height="242" fill="#000"/>
<rect x="514" y="738" width="600" height="2" fill="#c7ecea"/>
<rect x="1112" y="496" width="2" height="244" fill="#9adad8"/>
<rect x="1114" y="496" width="35" height="245" fill="#1a4c42"/>
<rect x="512" y="741" width="635" height="27" fill="#9adad8"/>
<path d="M512 741H1147L1145 743H514V766L512 768Z" fill="#d2f4f2"/><path d="M1147 768H512L514 765H1145V743L1147 741Z" fill="#3e7a70"/>
<text x="808" y="761" font-family="Liberation Mono" font-size="14.500" fill="#111" textLength="44">Close</text>
<rect x="514" y="478" width="15" height="14" fill="#fff"/><rect x="514" y="478" width="15" height="3" fill="#223a80"/><rect x="516" y="482" width="11" height="9" fill="#b9c95a"/><path d="M517 483L526 490M526 483L517 490" stroke="#333" stroke-width="1.500"/>
<text x="530" y="488" font-family="Liberation Sans" font-size="11" fill="#e0dcd4" textLength="66">Popview - 2</text>
<rect x="1132.500" y="477.500" width="15" height="14" fill="#d4d0c8" stroke="#444"/><path d="M1136.500 481L1143.500 488M1143.500 481L1136.500 488" stroke="#000" stroke-width="1.500"/>

<svg x="514" y="496" width="598" height="242" viewBox="514 496 598 242">
<g fill="none" stroke="#f00" stroke-width="12.500" stroke-linecap="round">
<path d="M663 527Q660 540 668 549"/>
<path d="M675 524Q678 508 700 507Q722 508 728 524" stroke-width="14" stroke-linecap="butt"/>
<path d="M734 527Q736 540 722 549"/>
<path d="M690 558Q658 562 661 580Q662 590 668 591"/>
<path d="M660 636V606H690" stroke-linecap="butt"/>
<path d="M669 650Q658 662 663 675Q672 688 692 682" stroke-linecap="butt"/>
<path d="M782 526Q784 540 792 546" stroke-linecap="butt"/>
<path d="M860 526Q856 538 846 548"/>
<path d="M812 552Q780 558 782 575Q784 585 792 587"/>
<path d="M786 626V597H815" stroke-linecap="butt"/>
<path d="M860 672V645Q860 637 850 638Q835 640 826 655Q815 672 798 670Q786 667 787 655Q788 640 800 637"/>
<path d="M928 527Q925 545 935 555" stroke-linecap="butt"/>
<path d="M1000 527Q1003 545 987 557"/>
<path d="M950 572Q918 578 920 595Q922 605 930 607"/>
<path d="M919 647V620H950" stroke-linecap="butt"/>
<path d="M920 670H992" stroke-width="11"/>
<path d="M991 653V684" stroke-width="11" stroke-linecap="butt"/>
<path d="M933 654V668" stroke-width="10" stroke-linecap="butt"/>
</g>
<g fill="#f00"><ellipse cx="711" cy="575" rx="24" ry="22"/><ellipse cx="713" cy="620" rx="24" ry="21.500"/><ellipse cx="836" cy="568" rx="28" ry="21.500"/><ellipse cx="838" cy="611" rx="26" ry="22"/><ellipse cx="973" cy="587" rx="28" ry="21"/><ellipse cx="972" cy="632" rx="27" ry="22"/></g>
<g fill="#000"><ellipse cx="708" cy="577" rx="14" ry="8.500"/><ellipse cx="709" cy="620" rx="13.500" ry="10"/><ellipse cx="832" cy="568" rx="15" ry="8"/><ellipse cx="832" cy="611" rx="14" ry="10"/><ellipse cx="971" cy="590" rx="15" ry="8"/><ellipse cx="968" cy="632" rx="14" ry="10"/></g>
<path d="M720 643Q740 652 734 668Q728 684 712 680Q698 676 696 660" fill="none" stroke="#00f0ff" stroke-width="13" stroke-linecap="round"/>
<rect x="514" y="683" width="595" height="33" fill="#429600"/>
<path d="M700 683H726Q720 688 712 688Q704 688 700 683Z" fill="#3068d8"/>
</svg>
<!-- popup buttons -->
<g>
<g fill="#9adad8">
<use href="#f" transform="translate(859 61) scale(.87)"/><use href="#f" transform="translate(859 96) scale(.87)"/><use href="#f" transform="translate(859 131) scale(.87)"/><use href="#f" transform="translate(859 166) scale(.87)"/><use href="#f" transform="translate(859 271) scale(.87)"/>
<use href="#f" transform="translate(1115 497) scale(.87)"/><use href="#f" transform="translate(1115 532) scale(.87)"/><use href="#f" transform="translate(1115 567) scale(.87)"/><use href="#f" transform="translate(1115 602) scale(.87)"/><use href="#f" transform="translate(1115 637) scale(.87)"/><use href="#f" transform="translate(1115 672) scale(.87)"/><use href="#f" transform="translate(1115 707) scale(.87)"/>
</g>
<use href="#ipop" transform="translate(859 61) scale(.87)"/><use href="#iup" transform="translate(859 96) scale(.87)"/><use href="#idn" transform="translate(859 131) scale(.87)"/><use href="#ilf" transform="translate(859 166) scale(.87)"/><use href="#imid" transform="translate(859 271) scale(.87)"/>
<use href="#ipop" transform="translate(1115 497) scale(.87)"/><use href="#iup" transform="translate(1115 532) scale(.87)"/><use href="#idn" transform="translate(1115 567) scale(.87)"/><use href="#ilf" transform="translate(1115 602) scale(.87)"/><use href="#irt" transform="translate(1115 637) scale(.87)"/><use href="#ifit" transform="translate(1115 672) scale(.87)"/><use href="#imid" transform="translate(1115 707) scale(.87)"/>
</g>

<!-- annotations -->
<ellipse cx="843" cy="646" rx="215" ry="59" fill="none" stroke="#3a3a00" stroke-width="2" transform="translate(1 3)" opacity=".5"/>
<ellipse cx="843" cy="646" rx="215" ry="59" fill="none" stroke="#f5f010" stroke-width="1.600"/>
<path d="M836 241L704 197" stroke="#ffff00" stroke-width="4"/>
<path d="M683 191L709 191L705 207Z" fill="#ffff00"/>
<path d="M504 591L614 610" stroke="#ffff00" stroke-width="4"/>
<path d="M636 613L609 602L607 617Z" fill="#ffff00"/>
<rect x="836" y="201" width="178" height="76" fill="#fff"/>
<text x="881" y="226" class="c" font-size="21" textLength="85">字符被削</text>
<rect x="230" y="539" width="242" height="119" fill="#fff"/>
<text x="285" y="564" class="c" font-size="21.500" textLength="129">外形未削字符</text>
</svg>
</body></html>
